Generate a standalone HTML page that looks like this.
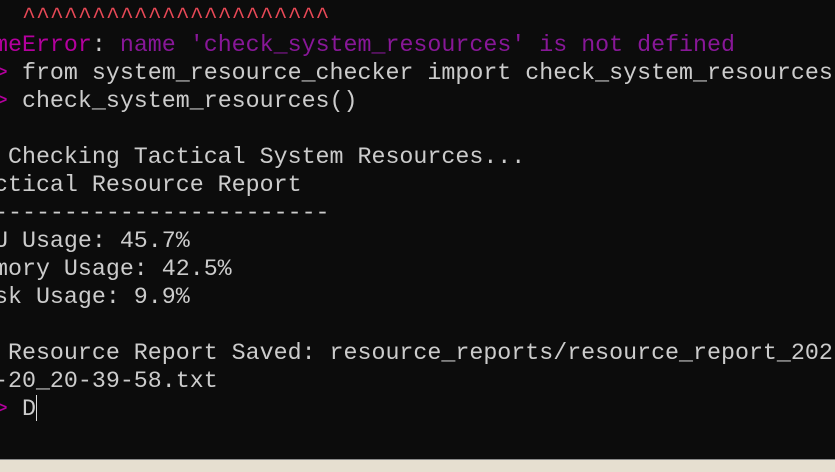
<!DOCTYPE html>
<html><head><style>
html,body{margin:0;padding:0;width:835px;height:471px;overflow:hidden;background:#0c0c0c}
pre{position:absolute;left:-6px;top:3px;margin:0;font-family:"Liberation Mono","DejaVu Sans Mono",monospace;font-size:23.3px;line-height:28px;color:#cccccc;white-space:pre}
.r{color:#e74856}.m{color:#b4009e}.p{color:#881798}
.cur{display:inline-block;width:1px;height:26px;background:#ddd;vertical-align:-6px}
.bar{position:absolute;left:0;top:459px;width:835px;height:12px;background:#e6dfd0;border-top:1px solid #8a8a8a}
</style></head><body>
<pre><span class="r">  ^^^^^^^^^^^^^^^^^^^^^^</span>
<span class="m">meError</span>: <span class="p">name 'check_system_resources' is not defined</span>
<span class="m">&gt;</span> from system_resource_checker import check_system_resources
<span class="m">&gt;</span> check_system_resources()

 Checking Tactical System Resources...
ctical Resource Report
------------------------
U Usage: 45.7%
mory Usage: 42.5%
sk Usage: 9.9%

 Resource Report Saved: resource_reports/resource_report_202
-20_20-39-58.txt
<span class="m">&gt;</span> D<span class="cur"></span></pre>
<div class="bar"></div>
</body></html>
